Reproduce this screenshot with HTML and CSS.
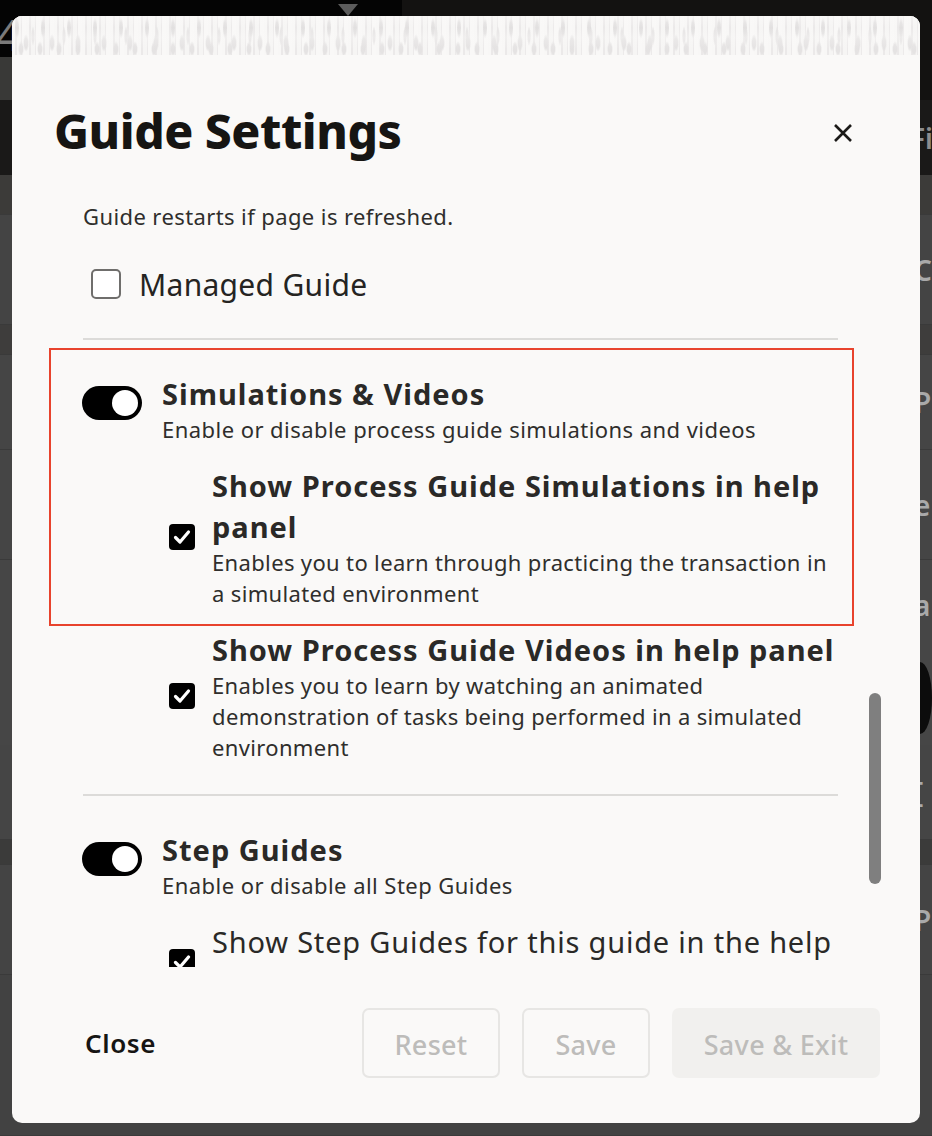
FILE: index.html
```html
<!DOCTYPE html>
<html lang="en">
<head>
<meta charset="utf-8">
<title>Guide Settings</title>
<link rel="stylesheet" href="styles.css">
</head>
<body>
<div class="backdrop">
  <div class="bd-head">
    <div class="bd-head-left">
      <div class="bd-head-black"><span class="bd-num">4</span><span class="bd-caret"></span></div>
      <div class="bd-head-gray"></div>
    </div>
    <div class="bd-head-right"></div>
  </div>
  <div class="bd-row bd-dark"><span class="peek">Fil</span></div>
  <div class="bd-row bd-r1"></div>
  <div class="bd-row bd-r2"><span class="peek">C</span></div>
  <div class="bd-row bd-r3"></div>
  <div class="bd-row bd-r4"><span class="peek">Pro</span></div>
  <div class="bd-row bd-r5"><span class="peek">e</span></div>
  <div class="bd-row bd-r6"><span class="peek">ar</span></div>
  <div class="bd-row bd-r7"><span class="peek circle"></span></div>
  <div class="bd-row bd-r8"><span class="peek">[</span></div>
  <div class="bd-row bd-r9"></div>
  <div class="bd-row bd-r10"><span class="peek">Pro</span></div>
  <div class="bd-row bd-r11"></div>
</div>

<div class="modal" role="dialog" aria-labelledby="gs-title">
  <div class="texture"></div>
  <div class="modal-head">
    <h1 id="gs-title" class="modal-title">Guide Settings</h1>
    <button class="close-x" aria-label="Close">
      <svg width="20" height="20" viewBox="0 0 20 20"><path d="M2 2 L18 18 M18 2 L2 18" stroke="#1b1a18" stroke-width="2.6" stroke-linecap="butt" fill="none"/></svg>
    </button>
  </div>

  <div class="scroll">
    <div class="scroll-content">
      <p class="note">Guide restarts if page is refreshed.</p>
      <label class="managed"><span class="box"></span><span>Managed Guide</span></label>
      <div class="divider divider-1"></div>

      <div class="section">
        <span class="toggle"><span class="knob"></span></span>
        <div class="sec-body">
          <div class="sec-title">Simulations &amp; Videos</div>
          <div class="sec-desc">Enable or disable process guide simulations and videos</div>
          <div class="sub">
            <span class="check"><svg width="26" height="26" viewBox="0 0 26 26"><path d="M6.5 13.5 L11 18 L19.5 8" stroke="#fff" stroke-width="3.2" fill="none" stroke-linecap="round" stroke-linejoin="round"/></svg></span>
            <div class="sub-body">
              <div class="sub-title">Show Process Guide Simulations in help panel</div>
              <div class="sub-desc">Enables you to learn through practicing the transaction in a simulated environment</div>
            </div>
          </div>
          <div class="sub">
            <span class="check"><svg width="26" height="26" viewBox="0 0 26 26"><path d="M6.5 13.5 L11 18 L19.5 8" stroke="#fff" stroke-width="3.2" fill="none" stroke-linecap="round" stroke-linejoin="round"/></svg></span>
            <div class="sub-body">
              <div class="sub-title">Show Process Guide Videos in help panel</div>
              <div class="sub-desc">Enables you to learn by watching an animated demonstration of tasks being performed in a simulated environment</div>
            </div>
          </div>
        </div>
      </div>
      <div class="divider divider-2"></div>

      <div class="section">
        <span class="toggle"><span class="knob"></span></span>
        <div class="sec-body">
          <div class="sec-title">Step Guides</div>
          <div class="sec-desc">Enable or disable all Step Guides</div>
          <div class="sub">
            <span class="check"><svg width="26" height="26" viewBox="0 0 26 26"><path d="M6.5 13.5 L11 18 L19.5 8" stroke="#fff" stroke-width="3.2" fill="none" stroke-linecap="round" stroke-linejoin="round"/></svg></span>
            <div class="sub-body">
              <div class="sub-title sub-regular">Show Step Guides for this guide in the help panel</div>
            </div>
          </div>
        </div>
      </div>
    </div>
    <div class="thumb"></div>
  </div>

  <div class="modal-foot">
    <button class="btn-close">Close</button>
    <div class="actions">
      <button class="btn btn-outline btn-reset" disabled>Reset</button>
      <button class="btn btn-outline btn-save" disabled>Save</button>
      <button class="btn btn-solid btn-exit" disabled>Save &amp; Exit</button>
    </div>
  </div>
</div>

<div class="highlight"></div>
</body>
</html>
```

FILE: styles.css
```css
* { box-sizing: border-box; }
html, body { margin: 0; padding: 0; }
body {
  width: 932px;
  height: 1136px;
  overflow: hidden;
  position: relative;
  background: #454545;
  font-family: "Noto Sans", "Open Sans", sans-serif;
}

/* ---------- page behind the dialog ---------- */
.backdrop { display: flex; flex-direction: column; height: 1136px; }
.bd-head { display: flex; height: 100px; }
.bd-head-left { width: 402px; display: flex; flex-direction: column; }
.bd-head-black {
  height: 57px;
  background: #040404;
  display: flex;
  align-items: flex-start;
}
.bd-num {
  color: #7a7a7a;
  font-size: 44px;
  line-height: 44px;
  margin: 12px 0 0 -4px;
}
.bd-caret {
  margin: 4px 44px 0 auto;
  width: 0; height: 0;
  border-left: 10px solid transparent;
  border-right: 10px solid transparent;
  border-top: 12px solid #5c5c5c;
}
.bd-head-gray { flex: 1; background: #393937; }
.bd-head-right { flex: 1; background: #131211; }

.bd-row { display: flex; overflow: hidden; border-bottom: 1px solid #3a3a3a; }
.peek {
  margin-left: 914px;
  white-space: nowrap;
  color: #a9a9a9;
  font-size: 28px;
  font-weight: 600;
  align-self: center;
}
.peek.circle {
  width: 60px; height: 72px; border-radius: 50%;
  background: #0c0c0c;
  margin-left: 908px;
}
.bd-dark { height: 75px; background: #1a1918; border-bottom: 0; }
.bd-dark .peek { color: #8d8d8d; margin-left: 910px; }
.bd-r1 { height: 40px; background: #3c3b39; }
.bd-r2 { height: 110px; background: #444; }
.bd-r3 { height: 30px; background: #3e3d3c; }
.bd-r4 { height: 95px; background: #454545; }
.bd-r5 { height: 110px; background: #454545; }
.bd-r6 { height: 90px; background: #464646; border-bottom: 0; }
.bd-r7 { height: 95px; background: #464646; border-bottom: 0; }
.bd-r8 { height: 95px; background: #454545; }
.bd-r9 { height: 25px; background: #3b3b3a; }
.bd-r10 { height: 110px; background: #444; }
.bd-r11 { flex: 1; background: #424242; }

/* ---------- dialog ---------- */
.modal {
  position: absolute;
  left: 12px;
  top: 16px;
  width: 908px;
  height: 1107px;
  background: #faf9f8;
  border-radius: 10px;
  overflow: hidden;
  display: flex;
  flex-direction: column;
}
.texture {
  height: 39px;
  flex: none;
  background-color: #f7f6f5;
  background-image:
    linear-gradient(to bottom, rgba(250,249,248,0.5) 0, rgba(250,249,248,0) 30%, rgba(250,249,248,0.35) 55%, rgba(250,249,248,0) 85%),
    radial-gradient(ellipse 2.5px 11px at 5px 12px, #e2e0e0 55%, rgba(226,224,224,0) 100%),
    radial-gradient(ellipse 3px 9px at 14px 27px, #e4e2e2 55%, rgba(228,226,226,0) 100%),
    radial-gradient(ellipse 2px 10px at 21px 20px, #e6e4e4 55%, rgba(230,228,228,0) 100%),
    radial-gradient(ellipse 3px 8px at 9px 33px, #e5e3e3 55%, rgba(229,227,227,0) 100%),
    repeating-linear-gradient(90deg, #f8f7f6 0 3px, #ebe9e9 3px 5px, #f6f5f4 5px 9px, #eceaea 9px 10px, #f9f8f7 10px 14px);
  background-size: 100% 100%, 26px 39px, 26px 39px, 31px 39px, 19px 39px, auto;
}
.modal-head {
  height: 149px;
  flex: none;
  display: flex;
  justify-content: space-between;
  align-items: flex-start;
  padding: 46px 67px 0 42px;
}
.modal-title {
  margin: 0;
  font-size: 48px;
  line-height: 60px;
  font-weight: 800;
  color: #161513;
  letter-spacing: -0.5px;
}
.close-x {
  margin-top: 22px;
  width: 20px; height: 20px;
  padding: 0; border: 0; background: none;
  display: flex;
}

.scroll {
  position: relative;
  height: 763px;
  flex: none;
  overflow: hidden;
}
.scroll-content {
  margin-top: -3px;
  padding: 0 82px 0 71px;
  color: #2f2e2c;
}
.thumb {
  position: absolute;
  left: 857px;
  top: 489px;
  width: 12px;
  height: 191px;
  border-radius: 6px;
  background: #7f7f7f;
}

.note {
  margin: 0;
  font-size: 22px;
  line-height: 30px;
  letter-spacing: 0.4px;
}
.managed {
  display: flex;
  align-items: center;
  gap: 18px;
  height: 40px;
  margin-top: 33px;
  padding-left: 8px;
  font-size: 30px;
  letter-spacing: 0.3px;
  color: #252422;
}
.box {
  width: 30px; height: 30px;
  border: 2px solid #6f6e6c;
  border-radius: 5px;
  background: #fff;
  flex: none;
}
.divider { height: 2px; background: #dcdbd9; }
.divider-1 { margin-top: 34px; }
.divider-2 { margin-top: 31px; }

.section { display: flex; gap: 20px; margin-top: 35px; }
.toggle {
  flex: none;
  width: 60px; height: 34px;
  margin: 11px 0 0 -1px;
  border-radius: 17px;
  background: #000;
  display: flex;
  justify-content: flex-end;
  align-items: center;
  padding: 0 4px;
}
.knob { width: 26px; height: 26px; border-radius: 50%; background: #fff; }
.sec-body { flex: 1; min-width: 0; }
.sec-title {
  font-size: 29px;
  line-height: 38px;
  font-weight: 700;
  letter-spacing: 1px;
  color: #2a2927;
}
.sec-desc {
  font-size: 22px;
  line-height: 32px;
  letter-spacing: 0.45px;
}
.sub {
  display: flex;
  align-items: center;
  gap: 17px;
  margin: 20px 0 0 7px;
}
.check {
  flex: none;
  width: 26px; height: 26px;
  border-radius: 4px;
  background: #000;
  display: flex;
}
.sub-body { flex: 1; min-width: 0; }
.sub-title {
  font-size: 29px;
  line-height: 41px;
  font-weight: 700;
  letter-spacing: 1px;
  color: #2a2927;
}
.sub-title.sub-regular { font-weight: 400; letter-spacing: 0.8px; }
.sub-desc {
  font-size: 22px;
  line-height: 31px;
  letter-spacing: 0.35px;
}

.modal-foot {
  flex: 1;
  display: flex;
  align-items: flex-start;
  justify-content: space-between;
  padding: 41px 40px 0 73px;
}
.btn-close {
  height: 70px;
  padding: 0;
  border: 0;
  background: none;
  font-family: inherit;
  font-size: 26px;
  font-weight: 600;
  letter-spacing: 0.6px;
  color: #161513;
}
.actions { display: flex; gap: 22px; }
.btn {
  height: 70px;
  border-radius: 7px;
  font-family: inherit;
  font-size: 27px;
  font-weight: 500;
  letter-spacing: 0.3px;
  color: #bdbcba;
  padding: 2px 0 0;
}
.btn-outline { border: 2px solid #e7e6e4; background: #faf9f8; }
.btn-solid { border: 0; background: #f1f0ee; }
.btn-reset { width: 138px; }
.btn-save { width: 128px; }
.btn-exit { width: 208px; }

/* annotation box */
.highlight {
  position: absolute;
  left: 49px;
  top: 348px;
  width: 805px;
  height: 278px;
  border: 2px solid #e8432d;
  pointer-events: none;
}
```
